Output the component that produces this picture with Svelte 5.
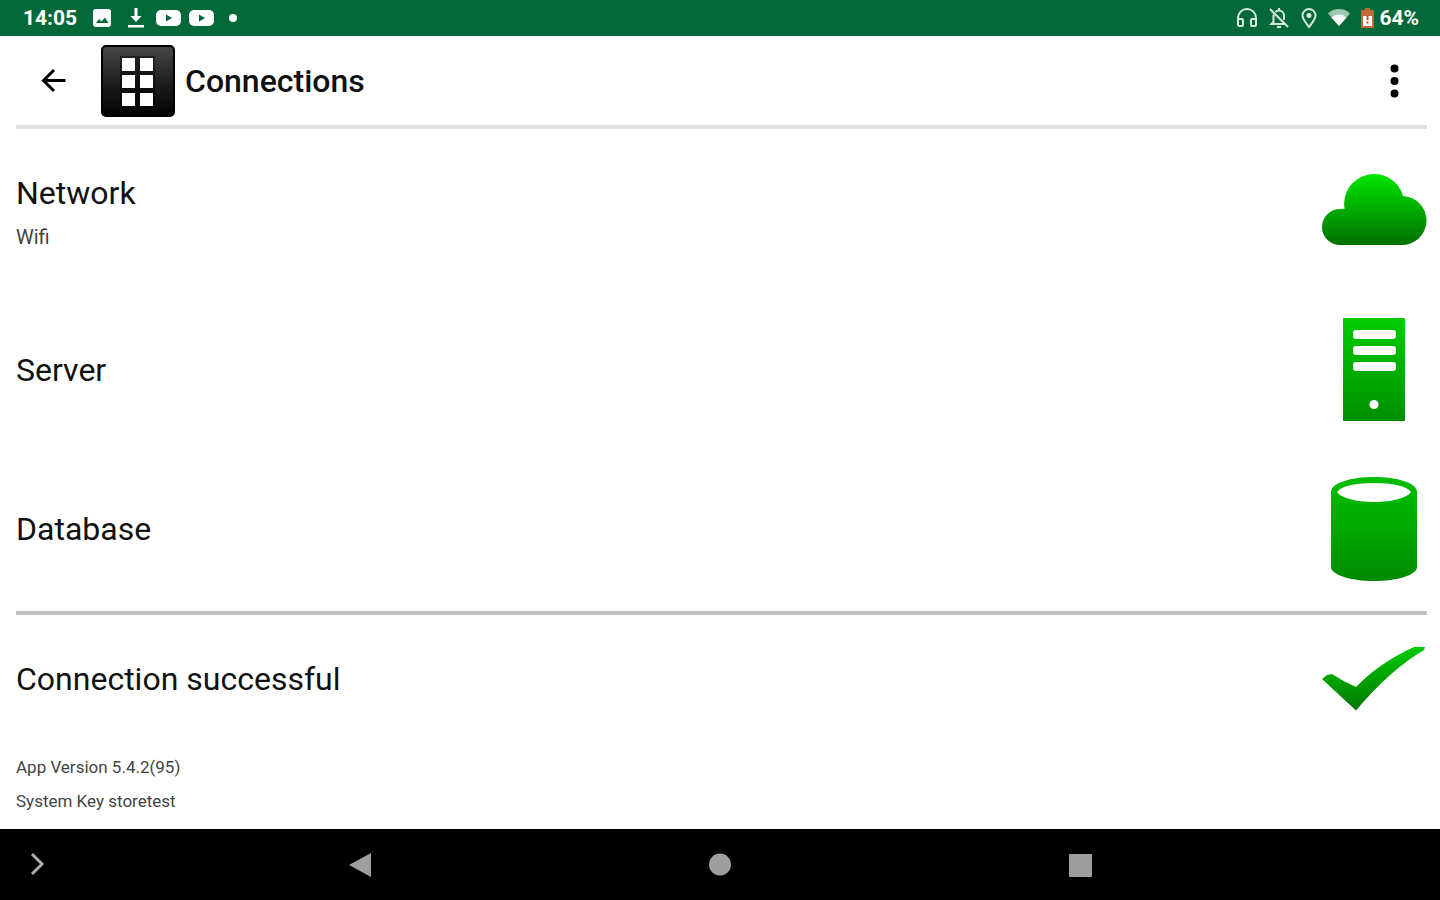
<script>
  const connections = [
    { name: 'Network', detail: 'Wifi', icon: 'cloud' },
    { name: 'Server', icon: 'server' },
    { name: 'Database', icon: 'database' },
  ];

  const result = 'Connection successful';
  const info = ['App Version 5.4.2(95)', 'System Key storetest'];
</script>

<div class="screen">
  <div class="status-bar">
    <div class="status-left">
      <span class="clock">14:05</span>
      <svg width="20" height="20" viewBox="0 0 20 20">
        <rect x="1" y="1" width="18" height="18" rx="3" fill="#fff" />
        <path d="M4 15l3-4 2.500 2.500L13 9.500l3.500 5.500z" fill="#04693a" />
      </svg>
      <svg width="18" height="22" viewBox="0 0 18 22">
        <path d="M7.500 1h3v8h4L9 15 3.500 9h4zM1 18h16v2.500H1z" fill="#fff" />
      </svg>
      <div class="videos">
        {#each [0, 1] as n (n)}
          <svg width="25" height="18" viewBox="0 0 25 18">
            <rect x="0" y="1" width="25" height="16" rx="5" fill="#fff" />
            <path d="M10 5.500v7l6-3.500z" fill="#04693a" />
          </svg>
        {/each}
      </div>
      <span class="dot"></span>
    </div>
    <div class="status-right">
      <svg width="22" height="22" viewBox="0 0 22 22" fill="none" stroke="#d5eadf" stroke-width="2">
        <path d="M2 18v-7a9 9 0 0 1 18 0v7" />
        <rect x="2" y="12" width="5" height="7" rx="1" />
        <rect x="15" y="12" width="5" height="7" rx="1" />
      </svg>
      <svg width="22" height="22" viewBox="0 0 22 22" fill="none" stroke="#d5eadf" stroke-width="2">
        <path d="M2 2l18 18M5.500 7.500V15L3.500 17H17M7.500 5A5 5 0 0 1 11 3.500c3 0 5 2.500 5 5.500v4" />
        <path d="M11 1v3M9 20h4" />
      </svg>
      <svg width="18" height="22" viewBox="0 0 18 22" fill="none" stroke="#d5eadf" stroke-width="2">
        <path d="M9 20C6 16 2.500 12 2.500 8.500a6.500 6.500 0 0 1 13 0C15.500 12 12 16 9 20z" />
        <circle cx="9" cy="8.500" r="1.500" fill="#d5eadf" />
      </svg>
      <svg width="22" height="18" viewBox="0 0 22 18">
        <path d="M0 4.500a16 16 0 0 1 22 0L11 17z" fill="#9cc8b0" />
        <path d="M3.500 8.500a11 11 0 0 1 15 0L11 17z" fill="#fff" />
      </svg>
      <div class="battery">
        <svg width="15" height="22" viewBox="0 0 15 22">
          <path d="M5 1h5v2h3a1 1 0 0 1 1 1v16a1 1 0 0 1-1 1H2a1 1 0 0 1-1-1V4a1 1 0 0 1 1-1h3z" fill="#c5683c" />
          <path d="M3 9h9v10H3z" fill="#fff" />
          <path d="M6.500 9h2v4h-2zM6.500 14.500h2v2h-2z" fill="#d9472b" />
        </svg>
        <span>64%</span>
      </div>
    </div>
  </div>

  <header>
    <button class="back" aria-label="Back">
      <svg width="26" height="26" viewBox="0 0 26 26" fill="none" stroke="#000" stroke-width="3">
        <path d="M25.500 12.500H4M14 2L3.500 12.500 14 23" />
      </svg>
    </button>
    <svg width="74" height="72" viewBox="0 0 74 72">
      <defs>
        <linearGradient id="tile" x1="0" y1="0" x2="0" y2="1">
          <stop offset="0" stop-color="#484848" />
          <stop offset="0.500" stop-color="#202020" />
          <stop offset="1" stop-color="#000" />
        </linearGradient>
      </defs>
      <rect x="1" y="1" width="72" height="70" rx="4" fill="url(#tile)" stroke="#000" stroke-width="2" />
      <path d="M19 11h35v52H19z" fill="#000" opacity="0.450" />
      <path
        d="M21 13h13v13H21zM39 13h13v13H39zM21 30h13v13H21zM39 30h13v13H39zM21 48h13v13H21zM39 48h13v13H39z"
        fill="#fff"
      />
    </svg>
    <h1>Connections</h1>
    <button class="menu" aria-label="More options">
      <svg width="10" height="34" viewBox="0 0 10 34">
        <circle cx="4.500" cy="4.500" r="4" />
        <circle cx="4.500" cy="17" r="4" />
        <circle cx="4.500" cy="29.500" r="4" />
      </svg>
    </button>
  </header>

  <main>
    <ul>
      {#each connections as item (item.name)}
        <li>
          <div>
            <h2>{item.name}</h2>
            {#if item.detail}<p class="detail">{item.detail}</p>{/if}
          </div>
          <svg width="104" height="104" viewBox="0 0 104 104">
            {#if item.icon === 'cloud'}
              <defs>
                <linearGradient id="cloud" x1="0" y1="0" x2="0" y2="1">
                  <stop offset="0" stop-color="#00e600" />
                  <stop offset="1" stop-color="#007000" />
                </linearGradient>
              </defs>
              <path
                d="M17 86a18 18 0 0 1 0-36q2-.5 4.500 0A30 30 0 0 1 80 37A24.500 24.500 0 0 1 78 86z"
                fill="url(#cloud)"
              />
            {:else if item.icon === 'server'}
              <defs>
                <linearGradient id="server" x1="0" y1="0" x2="0" y2="1">
                  <stop offset="0" stop-color="#00cc00" />
                  <stop offset="1" stop-color="#008f00" />
                </linearGradient>
              </defs>
              <rect x="20" y="0" width="62" height="103" rx="1" fill="url(#server)" />
              <g fill="#fff">
                <rect x="30" y="12" width="43" height="9" rx="3" />
                <rect x="30" y="28" width="43" height="9" rx="3" />
                <rect x="30" y="44" width="43" height="9" rx="3" />
                <circle cx="51" cy="86.500" r="4.500" />
              </g>
            {:else}
              <defs>
                <linearGradient id="database" x1="0" y1="0" x2="0" y2="1">
                  <stop offset="0" stop-color="#00bd00" />
                  <stop offset="0.400" stop-color="#00ad00" />
                  <stop offset="1" stop-color="#008a00" />
                </linearGradient>
              </defs>
              <path d="M8 15C8 6 28 0 51 0s43 6 43 15v75c0 8-20 14-43 14S8 98 8 90z" fill="url(#database)" />
              <path d="M14 15c4-6 19-9 37-9s33 3 37 9c-4 6-19 10-37 10s-33-4-37-10z" fill="#fff" />
            {/if}
          </svg>
        </li>
      {/each}
    </ul>

    <div class="result">
      <h2>{result}</h2>
      <svg width="104" height="104" viewBox="0 0 104 104">
        <defs>
          <linearGradient id="check" x1="0" y1="0" x2="0" y2="1">
            <stop offset="0" stop-color="#00cb00" />
            <stop offset="1" stop-color="#007800" />
          </linearGradient>
        </defs>
        <path
          d="M-1 52l5-4 5-1q12 8 24 13Q56 36 91 20l11 0-1 3Q67 43 33 83.500z"
          fill="url(#check)"
        />
      </svg>
    </div>

    <div class="info">
      {#each info as line}
        <p>{line}</p>
      {/each}
    </div>
  </main>

  <nav>
    <button class="expand" aria-label="Expand">
      <svg width="16" height="24" viewBox="0 0 16 24" fill="none" stroke="#ababab" stroke-width="3">
        <path d="M2 1l10 10L2 21" />
      </svg>
    </button>
    <button aria-label="Back">
      <svg width="24" height="26" viewBox="0 0 24 26"><path d="M1 13L23 1v24z" fill="#9e9e9e" /></svg>
    </button>
    <button aria-label="Home">
      <svg width="24" height="24" viewBox="0 0 24 24"><circle cx="12" cy="11.500" r="11" fill="#9e9e9e" /></svg>
    </button>
    <button aria-label="Recent apps">
      <svg width="24" height="24" viewBox="0 0 24 24"><rect x="1" y="1" width="23" height="23" rx="1" fill="#9e9e9e" /></svg>
    </button>
  </nav>
</div>

<style>
  :global(body) {
    margin: 0;
    background: #fff;
  }

  .screen {
    display: flex;
    flex-direction: column;
    min-height: 100vh;
    font-family: Roboto, 'Liberation Sans', sans-serif;
    color: #111;
  }

  svg {
    display: block;
    flex: none;
    overflow: visible;
  }

  h1,
  h2,
  p,
  ul {
    margin: 0;
    padding: 0;
    list-style: none;
  }

  button {
    display: flex;
    align-items: center;
    justify-content: center;
    padding: 0;
    border: 0;
    background: none;
    cursor: pointer;
  }

  .status-bar {
    display: flex;
    align-items: center;
    justify-content: space-between;
    height: 36px;
    padding: 0 21px 0 23px;
    background: #04693a;
    color: #fff;
    font-size: 21px;
    font-weight: 700;
  }

  .status-left {
    display: flex;
    align-items: center;
    gap: 15px;
  }

  .status-right {
    display: flex;
    align-items: center;
    gap: 10px;
  }

  .videos {
    display: flex;
    gap: 8px;
    margin-left: -4px;
  }

  .dot {
    width: 8px;
    height: 8px;
    border-radius: 50%;
    background: #fff;
  }

  .battery {
    display: flex;
    align-items: center;
    gap: 4px;
  }

  header {
    display: flex;
    align-items: center;
    height: 89px;
    margin: 0 13px 0 16px;
    border-bottom: 4px solid #e1e1e1;
  }

  .back {
    width: 74px;
    height: 74px;
    margin-right: 11px;
  }

  h1 {
    flex: 1;
    padding-left: 10px;
    font-size: 32px;
    font-weight: 500;
    line-height: 40px;
  }

  .menu {
    width: 64px;
    height: 64px;
  }

  main {
    flex: 1;
    padding: 0 13px 11px 16px;
  }

  ul {
    display: flex;
    flex-direction: column;
    gap: 55px;
    padding: 30px 0;
    border-bottom: 4px solid #c1c1c1;
  }

  li,
  .result {
    display: flex;
    align-items: center;
    justify-content: space-between;
  }

  .result {
    padding: 12px 0 19px;
  }

  h2 {
    font-size: 32px;
    font-weight: 400;
    line-height: 52px;
  }

  .detail {
    font-size: 20px;
    line-height: 36px;
    color: #444;
  }

  .info {
    font-size: 17px;
    line-height: 34px;
    color: #444;
  }

  nav {
    display: grid;
    grid-template-columns: 1fr 2fr 2fr 2fr 1fr;
    height: 71px;
    background: #000;
  }

  .expand {
    justify-content: flex-start;
    padding-left: 30px;
  }
</style>
